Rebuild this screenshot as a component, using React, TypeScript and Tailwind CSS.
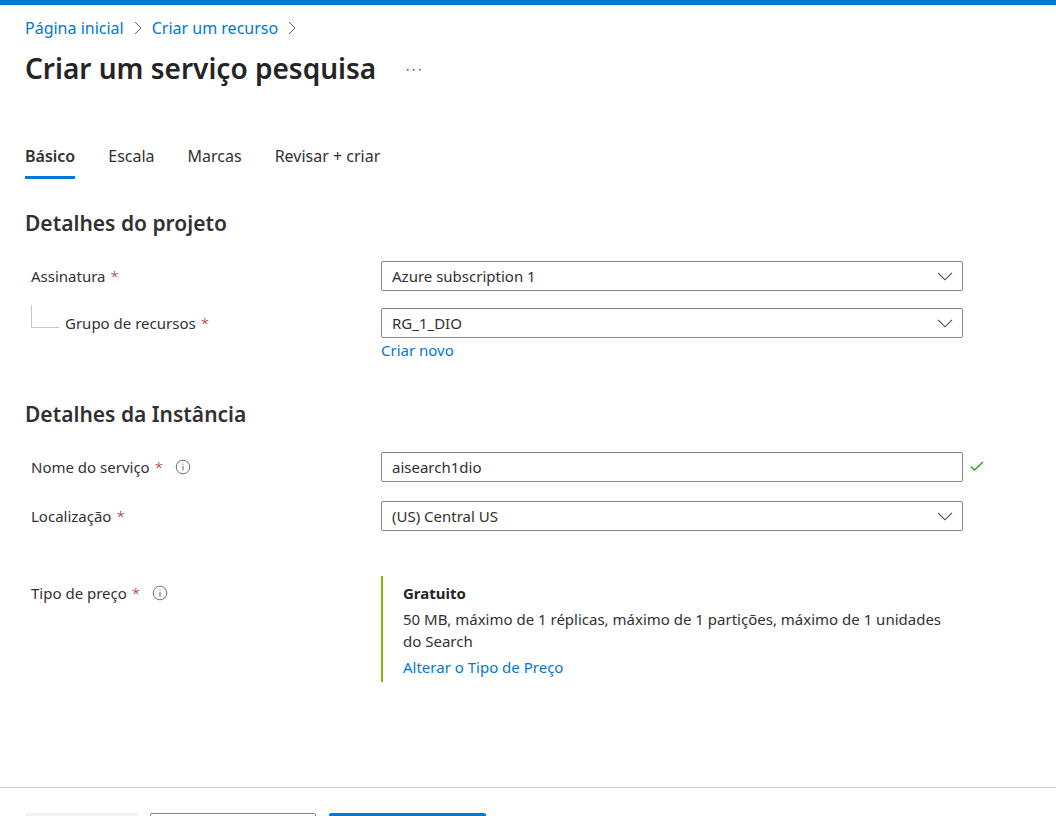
import type { ReactNode } from "react";

const tabs = ["Básico", "Escala", "Marcas", "Revisar + criar"];

function CrumbArrow() {
  return (
    <svg className="h-4 w-3" viewBox="0 0 12 16" fill="none" stroke="#605e5c" aria-hidden="true">
      <path d="M3 2 9 8 3 14" />
    </svg>
  );
}

function InfoIcon() {
  return (
    <svg className="ml-3 h-4 w-4" viewBox="0 0 16 16" fill="none" stroke="#605e5c" aria-hidden="true">
      <circle cx="8" cy="8" r="6.8" strokeWidth="0.9" />
      <path d="M8 7v4.5M8 4.6v1.1" />
    </svg>
  );
}

function Label({ id, info, children }: { id?: string; info?: boolean; children: ReactNode }) {
  return (
    <div className="flex h-[30px] items-center text-[15px]">
      <label htmlFor={id} className="flex gap-[5px]">
        {children} <span className="font-light text-[#a4262c]">*</span>
      </label>
      {info && <InfoIcon />}
    </div>
  );
}

function Row({ label, children, side }: { label: ReactNode; children: ReactNode; side?: ReactNode }) {
  return (
    <div className="flex pl-1.5">
      <div className="w-[350px] shrink-0">{label}</div>
      <div className="min-w-0 flex-1">{children}</div>
      <div className="w-[93px] shrink-0 pl-1.5">{side}</div>
    </div>
  );
}

function SelectBox({ id, value }: { id: string; value: string }) {
  return (
    <div className="relative">
      <select
        id={id}
        className="block h-[30px] w-full appearance-none rounded-xs border border-[#8a8886] bg-white px-2.5 text-[15px]"
      >
        <option>{value}</option>
      </select>
      <svg
        className="pointer-events-none absolute top-[7px] right-2.5 h-4 w-4"
        viewBox="0 0 16 16"
        fill="none"
        stroke="#484644"
        strokeWidth="1.1"
        aria-hidden="true"
      >
        <path d="M1 4.8 8 11.8 15 4.8" />
      </svg>
    </div>
  );
}

export default function App() {
  return (
    <div className="h-screen overflow-hidden border-t-[5px] border-[#0078d4] bg-white font-['Noto_Sans',sans-serif] text-[#323130]">
      <header className="px-[25px] pt-[11px]">
        <nav aria-label="Navegação" className="flex h-6 items-center gap-2 text-[16px] text-[#0078d4]">
          <a href="#inicio">Página inicial</a>
          <CrumbArrow />
          <a href="#recurso">Criar um recurso</a>
          <CrumbArrow />
        </nav>
        <div className="mt-2 flex h-10 items-center gap-[30px]">
          <h1 className="text-[28px] font-semibold text-[#242424]">Criar um serviço pesquisa</h1>
          <button type="button" aria-label="Mais opções">
            <svg className="h-4 w-4" viewBox="0 0 16 16" fill="#484644" aria-hidden="true">
              <path d="M1 9h1.5v1.5H1zM7 9h1.5v1.5H7zM13 9h1.5v1.5H13z" />
            </svg>
          </button>
        </div>
      </header>

      <main className="pl-[25px]">
        <div role="tablist" className="mt-14 flex h-[35px] gap-[33px] text-[16px]">
          {tabs.map((tab, i) => (
            <button
              key={tab}
              type="button"
              role="tab"
              aria-selected={i === 0}
              className={
                i === 0
                  ? "border-b-[3px] border-[#0078d4] pb-2 font-semibold"
                  : "border-b-[3px] border-transparent pb-2"
              }
            >
              {tab}
            </button>
          ))}
        </div>

        <section className="pt-7">
          <h2 className="text-[21px] leading-8 font-semibold">Detalhes do projeto</h2>
          <div className="mt-[22px] flex flex-col gap-[17px]">
            <Row label={<Label id="assinatura">Assinatura</Label>}>
              <SelectBox id="assinatura" value="Azure subscription 1" />
            </Row>
            <Row
              label={
                <div className="flex items-start gap-1.5">
                  <span className="-mt-[3px] h-[23px] w-7 border-b border-l border-[#c8c6c4]" />
                  <Label id="grupo">Grupo de recursos</Label>
                </div>
              }
            >
              <SelectBox id="grupo" value="RG_1_DIO" />
              <a href="#novo" className="block text-[15px] leading-6 text-[#0078d4]">
                Criar novo
              </a>
            </Row>
          </div>
        </section>

        <section className="pt-9">
          <h2 className="text-[21px] leading-8 font-semibold">Detalhes da Instância</h2>
          <div className="mt-[22px] flex flex-col gap-[19px]">
            <Row
              label={<Label id="nome" info>Nome do serviço</Label>}
              side={
                <svg className="mt-1.5 h-4 w-4" viewBox="0 0 16 16" fill="none" stroke="#2a9a2a" strokeWidth="1.3" aria-hidden="true">
                  <path d="M1.8 8.5 5.5 12 14 4" />
                </svg>
              }
            >
              <input
                id="nome"
                type="text"
                defaultValue="aisearch1dio"
                className="block h-[30px] w-full rounded-xs border border-[#8a8886] px-2.5 text-[15px]"
              />
            </Row>
            <Row label={<Label id="local">Localização</Label>}>
              <SelectBox id="local" value="(US) Central US" />
            </Row>
          </div>
          <div className="mt-[45px]">
            <Row label={<div className="pt-0.5"><Label info>Tipo de preço</Label></div>}>
              <div className="flex h-[106px] flex-col gap-1 border-l-2 border-[#7fba00] pt-1.5 pl-5 text-[15px] leading-[22px]">
                <strong className="font-bold text-[#242424]">Gratuito</strong>
                <p>50 MB, máximo de 1 réplicas, máximo de 1 partições, máximo de 1 unidades do Search</p>
                <a href="#preco" className="text-[#0078d4]">
                  Alterar o Tipo de Preço
                </a>
              </div>
            </Row>
          </div>
        </section>
      </main>

      <footer className="mt-[105px] flex border-t border-[#d0cecc] px-[25px] pt-[25px]">
        <button type="button" disabled aria-label="Anterior" className="h-8 w-[113px] rounded-xs bg-[#f3f2f1]" />
        <button type="button" aria-label="Próximo" className="ml-3 h-8 w-[166px] rounded-xs border border-[#8a8886]" />
        <button type="button" aria-label="Revisar e criar" className="ml-[13px] h-8 w-[157px] rounded-xs bg-[#0078d4]" />
      </footer>
    </div>
  );
}
